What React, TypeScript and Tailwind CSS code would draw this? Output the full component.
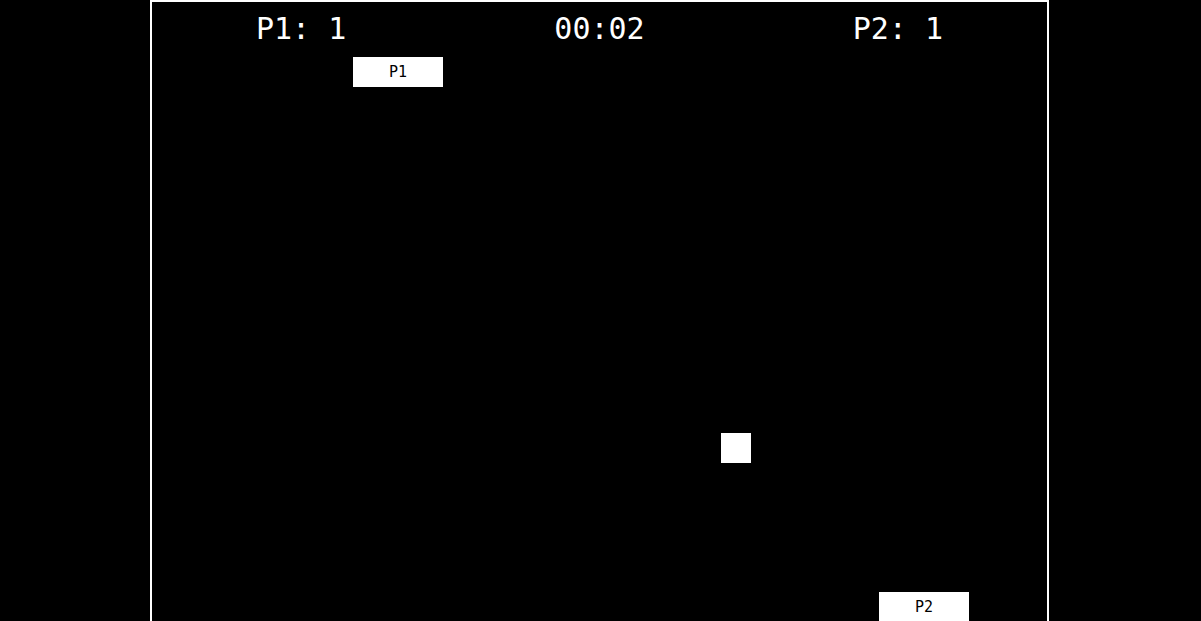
export default function App() {
  const paddle =
    'absolute flex h-[30px] w-[90px] items-center justify-center bg-white text-[15px] text-black'

  return (
    <div className="min-h-screen bg-black pl-[150px] font-['DejaVu_Sans_Mono',monospace]">
      <div className="relative h-[660px] w-[899px] border-2 border-white">
        {/* scoreboard */}
        <div className="grid grid-cols-3 pt-[9px] text-center text-[30px] leading-[35px] text-white">
          <span>P1: 1</span>
          <span>00:02</span>
          <span>P2: 1</span>
        </div>

        {/* field */}
        <div className={paddle + ' left-[201px] top-[55px]'}>P1</div>
        <div className="absolute left-[569px] top-[431px] h-[30px] w-[30px] bg-white" />
        <div className={paddle + ' left-[727px] top-[590px]'}>P2</div>
      </div>
    </div>
  )
}
